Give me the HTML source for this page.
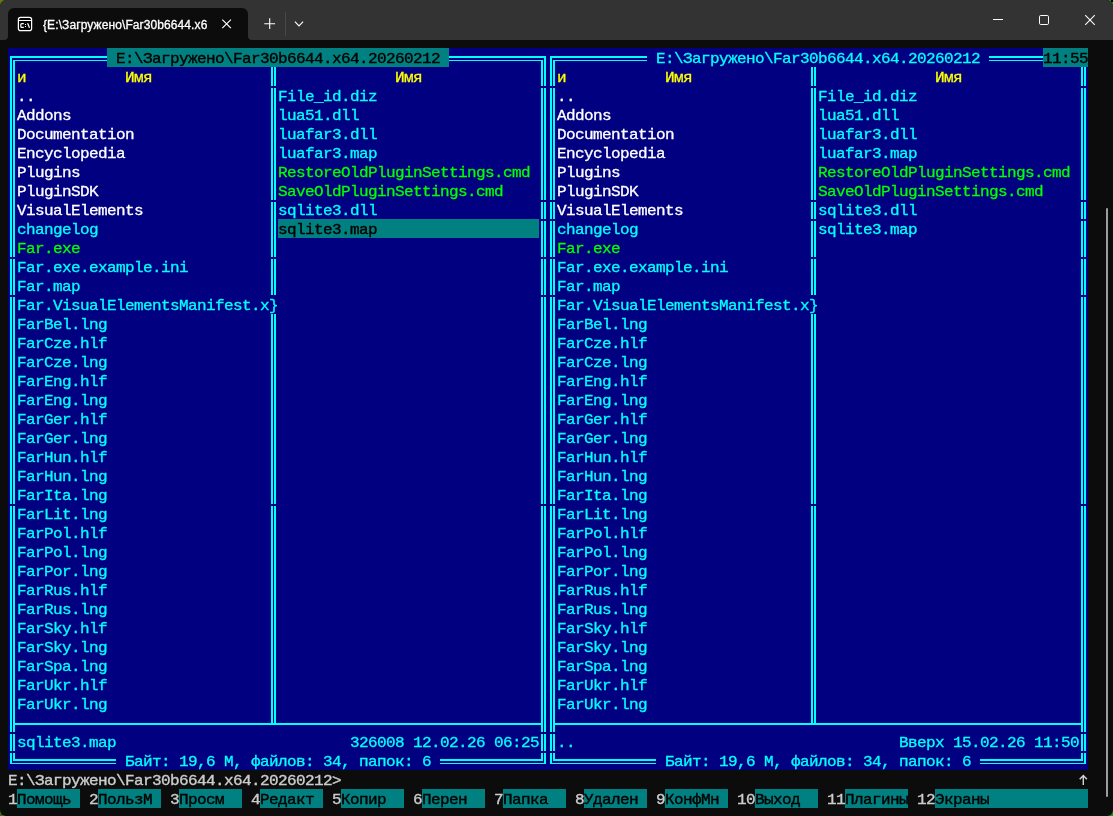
<!DOCTYPE html>
<html lang="ru"><head><meta charset="utf-8"><title>Far</title>
<style>
html,body{margin:0;padding:0;width:1113px;height:816px;overflow:hidden;background:#089208}
#win{will-change:transform;position:absolute;left:0;top:0;width:1113px;height:816px;background:#0c0c0c;overflow:hidden;border-radius:7px 7px 6px 6px}
#tb{position:absolute;left:0;top:0;width:1113px;height:40px;background:#333333}
#tab{position:absolute;left:8px;top:8px;width:240px;height:32px;background:#0c0c0c;border-radius:6px 6px 0 0}
#tabl,#tabr{position:absolute;top:36px;width:4px;height:4px;background:#0c0c0c}
#tabl{left:4px}#tabr{left:248px}
#tabl:after,#tabr:after{content:"";position:absolute;left:0;top:0;width:4px;height:4px;background:#333333}
#tabl:after{border-radius:0 0 4px 0}#tabr:after{border-radius:0 0 0 4px}
#ttl{position:absolute;left:43px;top:18px;height:16px;line-height:16px;font:12px "Liberation Sans",sans-serif;color:#fff;white-space:pre;letter-spacing:0.1px;-webkit-text-stroke:0.3px #fff}
#tb svg{position:absolute;overflow:visible}
#sep{position:absolute;left:285px;top:12px;width:1px;height:24px;background:#474747}
#sb{position:absolute;left:1106px;top:208px;width:2px;height:589px;background:#9d9d9d;border-radius:1px}
#term i{position:absolute;display:block}
#term b{position:absolute;display:block;height:19px;line-height:19px;font:normal 16px "Liberation Mono",monospace;letter-spacing:-0.6016px;white-space:pre;margin-top:2px;transform-origin:0 13px;transform:translateY(-.25px) scaleY(.885)}
.c{color:#00ffff;-webkit-text-stroke:0.33px #00ffff}
.w{color:#ffffff;-webkit-text-stroke:0.33px #ffffff}
.y{color:#ffff00;-webkit-text-stroke:0.33px #ffff00}
.g{color:#00ff00;-webkit-text-stroke:0.33px #00ff00}
.s{color:#cccccc;-webkit-text-stroke:0.4px #cccccc}
.k{color:#000000;-webkit-text-stroke:0.4px #000000}
.cp{position:absolute;width:2px;height:2px}

</style></head>
<body>
<i class="cp" style="left:0;top:0;background:#b84a26"></i><i class="cp" style="left:1111px;top:0;background:#000"></i><i class="cp" style="left:0;top:814px;background:#7a4020"></i><i class="cp" style="left:1111px;top:814px;background:#2a8a18"></i>
<div id="win">
<div id="tb">
<div id="tab"></div><div id="tabl"></div><div id="tabr"></div>
<div id="ttl">{E:\Загружено\Far30b6644.x6</div>
<div id="sep"></div>
<svg style="left:0;top:0" width="1113" height="40" viewBox="0 0 1113 40" fill="none" stroke="#fff" stroke-width="1">
<rect x="18.4" y="17.4" width="13.2" height="13.3" rx="2.2" stroke-width="1.25" fill="#000"/>
<path d="M18.4 20.5H31.6" stroke-width="1.2"/>
<path d="M23.8 23.7H21.9Q20.8 23.7 20.8 24.6V26.4Q20.8 27.3 21.9 27.3H23.8" stroke-width="1.2"/>
<path d="M25.5 24V25M25.5 26V27" stroke-width="1.1"/>
<path d="M27.6 23.2L29.5 27.8" stroke-width="1.25"/>
<path d="M222.3 19.6L230.9 28.2M230.9 19.6L222.3 28.2" stroke-width="1.15"/>
<path d="M269.7 18.3V29.1M264.3 23.7H275.1" stroke-width="1.1"/>
<path d="M294.9 21.6L299 25.9L303.1 21.6" stroke-width="1.1"/>
<path d="M993 19.5H1003" stroke-width="1"/>
<rect x="1039.5" y="15.5" width="9" height="9" rx="1.2"/>
<path d="M1085.2 15.2L1094.8 24.8M1094.8 15.2L1085.2 24.8" stroke-width="1.05"/>
</svg>
</div>
<div id="sb"></div>

<div id="term">
<i style="left:8px;top:48px;width:1080px;height:722px;background:#000080"></i>
<i style="left:107px;top:48px;width:342px;height:19px;background:#008080"></i>
<i style="left:1043px;top:48px;width:45px;height:19px;background:#008080"></i>
<i style="left:278px;top:219px;width:261px;height:19px;background:#008080"></i>
<i style="left:17px;top:789px;width:63px;height:19px;background:#008080"></i>
<i style="left:98px;top:789px;width:63px;height:19px;background:#008080"></i>
<i style="left:179px;top:789px;width:63px;height:19px;background:#008080"></i>
<i style="left:260px;top:789px;width:63px;height:19px;background:#008080"></i>
<i style="left:341px;top:789px;width:63px;height:19px;background:#008080"></i>
<i style="left:422px;top:789px;width:63px;height:19px;background:#008080"></i>
<i style="left:503px;top:789px;width:63px;height:19px;background:#008080"></i>
<i style="left:584px;top:789px;width:63px;height:19px;background:#008080"></i>
<i style="left:665px;top:789px;width:63px;height:19px;background:#008080"></i>
<i style="left:755px;top:789px;width:63px;height:19px;background:#008080"></i>
<i style="left:845px;top:789px;width:63px;height:19px;background:#008080"></i>
<i style="left:935px;top:789px;width:153px;height:19px;background:#008080"></i>
<i style="left:17px;top:56px;width:90px;height:2px;background:#00ffff"></i>
<i style="left:17px;top:60px;width:90px;height:1px;background:#00ffff"></i>
<i style="left:449px;top:56px;width:90px;height:2px;background:#00ffff"></i>
<i style="left:449px;top:60px;width:90px;height:1px;background:#00ffff"></i>
<i style="left:557px;top:56px;width:90px;height:2px;background:#00ffff"></i>
<i style="left:557px;top:60px;width:90px;height:1px;background:#00ffff"></i>
<i style="left:989px;top:56px;width:54px;height:2px;background:#00ffff"></i>
<i style="left:989px;top:60px;width:54px;height:1px;background:#00ffff"></i>
<i style="left:17px;top:723px;width:252px;height:2px;background:#00ffff"></i>
<i style="left:278px;top:723px;width:261px;height:2px;background:#00ffff"></i>
<i style="left:557px;top:723px;width:252px;height:2px;background:#00ffff"></i>
<i style="left:818px;top:723px;width:261px;height:2px;background:#00ffff"></i>
<i style="left:17px;top:759px;width:99px;height:2px;background:#00ffff"></i>
<i style="left:17px;top:763px;width:99px;height:1px;background:#00ffff"></i>
<i style="left:440px;top:759px;width:99px;height:2px;background:#00ffff"></i>
<i style="left:440px;top:763px;width:99px;height:1px;background:#00ffff"></i>
<i style="left:557px;top:759px;width:99px;height:2px;background:#00ffff"></i>
<i style="left:557px;top:763px;width:99px;height:1px;background:#00ffff"></i>
<i style="left:980px;top:759px;width:99px;height:2px;background:#00ffff"></i>
<i style="left:980px;top:763px;width:99px;height:1px;background:#00ffff"></i>
<i style="left:10px;top:67px;width:2px;height:646px;background:#00ffff"></i>
<i style="left:13px;top:67px;width:2px;height:646px;background:#00ffff"></i>
<i style="left:10px;top:732px;width:2px;height:19px;background:#00ffff"></i>
<i style="left:13px;top:732px;width:2px;height:19px;background:#00ffff"></i>
<i style="left:271px;top:67px;width:2px;height:228px;background:#00ffff"></i>
<i style="left:274px;top:67px;width:2px;height:228px;background:#00ffff"></i>
<i style="left:271px;top:314px;width:2px;height:399px;background:#00ffff"></i>
<i style="left:274px;top:314px;width:2px;height:399px;background:#00ffff"></i>
<i style="left:541px;top:67px;width:2px;height:646px;background:#00ffff"></i>
<i style="left:544px;top:67px;width:2px;height:646px;background:#00ffff"></i>
<i style="left:541px;top:732px;width:2px;height:19px;background:#00ffff"></i>
<i style="left:544px;top:732px;width:2px;height:19px;background:#00ffff"></i>
<i style="left:550px;top:67px;width:2px;height:646px;background:#00ffff"></i>
<i style="left:553px;top:67px;width:2px;height:646px;background:#00ffff"></i>
<i style="left:550px;top:732px;width:2px;height:19px;background:#00ffff"></i>
<i style="left:553px;top:732px;width:2px;height:19px;background:#00ffff"></i>
<i style="left:811px;top:67px;width:2px;height:228px;background:#00ffff"></i>
<i style="left:814px;top:67px;width:2px;height:228px;background:#00ffff"></i>
<i style="left:811px;top:314px;width:2px;height:399px;background:#00ffff"></i>
<i style="left:814px;top:314px;width:2px;height:399px;background:#00ffff"></i>
<i style="left:1081px;top:67px;width:2px;height:646px;background:#00ffff"></i>
<i style="left:1084px;top:67px;width:2px;height:646px;background:#00ffff"></i>
<i style="left:1081px;top:732px;width:2px;height:19px;background:#00ffff"></i>
<i style="left:1084px;top:732px;width:2px;height:19px;background:#00ffff"></i>
<i style="left:10px;top:56px;width:2px;height:11px;background:#00ffff"></i>
<i style="left:10px;top:56px;width:7px;height:2px;background:#00ffff"></i>
<i style="left:13px;top:60px;width:2px;height:7px;background:#00ffff"></i>
<i style="left:13px;top:60px;width:4px;height:1px;background:#00ffff"></i>
<i style="left:544px;top:56px;width:2px;height:11px;background:#00ffff"></i>
<i style="left:539px;top:56px;width:7px;height:2px;background:#00ffff"></i>
<i style="left:541px;top:60px;width:2px;height:7px;background:#00ffff"></i>
<i style="left:539px;top:60px;width:4px;height:1px;background:#00ffff"></i>
<i style="left:550px;top:56px;width:2px;height:11px;background:#00ffff"></i>
<i style="left:550px;top:56px;width:7px;height:2px;background:#00ffff"></i>
<i style="left:553px;top:60px;width:2px;height:7px;background:#00ffff"></i>
<i style="left:553px;top:60px;width:4px;height:1px;background:#00ffff"></i>
<i style="left:10px;top:713px;width:2px;height:19px;background:#00ffff"></i>
<i style="left:13px;top:713px;width:2px;height:19px;background:#00ffff"></i>
<i style="left:15px;top:723px;width:2px;height:2px;background:#00ffff"></i>
<i style="left:271px;top:713px;width:2px;height:10px;background:#00ffff"></i>
<i style="left:274px;top:713px;width:2px;height:10px;background:#00ffff"></i>
<i style="left:269px;top:723px;width:9px;height:2px;background:#00ffff"></i>
<i style="left:541px;top:713px;width:2px;height:19px;background:#00ffff"></i>
<i style="left:544px;top:713px;width:2px;height:19px;background:#00ffff"></i>
<i style="left:539px;top:723px;width:2px;height:2px;background:#00ffff"></i>
<i style="left:550px;top:713px;width:2px;height:19px;background:#00ffff"></i>
<i style="left:553px;top:713px;width:2px;height:19px;background:#00ffff"></i>
<i style="left:555px;top:723px;width:2px;height:2px;background:#00ffff"></i>
<i style="left:811px;top:713px;width:2px;height:10px;background:#00ffff"></i>
<i style="left:814px;top:713px;width:2px;height:10px;background:#00ffff"></i>
<i style="left:809px;top:723px;width:9px;height:2px;background:#00ffff"></i>
<i style="left:1081px;top:713px;width:2px;height:19px;background:#00ffff"></i>
<i style="left:1084px;top:713px;width:2px;height:19px;background:#00ffff"></i>
<i style="left:1079px;top:723px;width:2px;height:2px;background:#00ffff"></i>
<i style="left:10px;top:751px;width:2px;height:13px;background:#00ffff"></i>
<i style="left:10px;top:763px;width:7px;height:1px;background:#00ffff"></i>
<i style="left:13px;top:751px;width:2px;height:10px;background:#00ffff"></i>
<i style="left:13px;top:759px;width:4px;height:2px;background:#00ffff"></i>
<i style="left:544px;top:751px;width:2px;height:13px;background:#00ffff"></i>
<i style="left:539px;top:763px;width:7px;height:1px;background:#00ffff"></i>
<i style="left:541px;top:751px;width:2px;height:10px;background:#00ffff"></i>
<i style="left:539px;top:759px;width:4px;height:2px;background:#00ffff"></i>
<i style="left:550px;top:751px;width:2px;height:13px;background:#00ffff"></i>
<i style="left:550px;top:763px;width:7px;height:1px;background:#00ffff"></i>
<i style="left:553px;top:751px;width:2px;height:10px;background:#00ffff"></i>
<i style="left:553px;top:759px;width:4px;height:2px;background:#00ffff"></i>
<i style="left:1084px;top:751px;width:2px;height:13px;background:#00ffff"></i>
<i style="left:1079px;top:763px;width:7px;height:1px;background:#00ffff"></i>
<i style="left:1081px;top:751px;width:2px;height:10px;background:#00ffff"></i>
<i style="left:1079px;top:759px;width:4px;height:2px;background:#00ffff"></i>
<i style="left:10px;top:257px;width:5px;height:2px;background:#000080"></i>
<i style="left:10px;top:295px;width:5px;height:2px;background:#000080"></i>
<i style="left:10px;top:504px;width:5px;height:2px;background:#000080"></i>
<i style="left:10px;top:732px;width:5px;height:2px;background:#000080"></i>
<i style="left:10px;top:751px;width:5px;height:2px;background:#000080"></i>
<i style="left:271px;top:86px;width:5px;height:2px;background:#000080"></i>
<i style="left:271px;top:200px;width:5px;height:2px;background:#000080"></i>
<i style="left:271px;top:257px;width:5px;height:2px;background:#000080"></i>
<i style="left:271px;top:504px;width:5px;height:2px;background:#000080"></i>
<i style="left:541px;top:86px;width:5px;height:2px;background:#000080"></i>
<i style="left:541px;top:200px;width:5px;height:2px;background:#000080"></i>
<i style="left:541px;top:219px;width:5px;height:2px;background:#000080"></i>
<i style="left:541px;top:257px;width:5px;height:2px;background:#000080"></i>
<i style="left:541px;top:295px;width:5px;height:2px;background:#000080"></i>
<i style="left:541px;top:504px;width:5px;height:2px;background:#000080"></i>
<i style="left:541px;top:732px;width:5px;height:2px;background:#000080"></i>
<i style="left:541px;top:751px;width:5px;height:2px;background:#000080"></i>
<i style="left:550px;top:86px;width:5px;height:2px;background:#000080"></i>
<i style="left:550px;top:200px;width:5px;height:2px;background:#000080"></i>
<i style="left:550px;top:219px;width:5px;height:2px;background:#000080"></i>
<i style="left:550px;top:257px;width:5px;height:2px;background:#000080"></i>
<i style="left:550px;top:295px;width:5px;height:2px;background:#000080"></i>
<i style="left:550px;top:504px;width:5px;height:2px;background:#000080"></i>
<i style="left:550px;top:732px;width:5px;height:2px;background:#000080"></i>
<i style="left:550px;top:751px;width:5px;height:2px;background:#000080"></i>
<i style="left:811px;top:86px;width:5px;height:2px;background:#000080"></i>
<i style="left:811px;top:200px;width:5px;height:2px;background:#000080"></i>
<i style="left:811px;top:219px;width:5px;height:2px;background:#000080"></i>
<i style="left:811px;top:257px;width:5px;height:2px;background:#000080"></i>
<i style="left:811px;top:504px;width:5px;height:2px;background:#000080"></i>
<i style="left:1081px;top:86px;width:5px;height:2px;background:#000080"></i>
<i style="left:1081px;top:200px;width:5px;height:2px;background:#000080"></i>
<i style="left:1081px;top:219px;width:5px;height:2px;background:#000080"></i>
<i style="left:1081px;top:257px;width:5px;height:2px;background:#000080"></i>
<i style="left:1081px;top:295px;width:5px;height:2px;background:#000080"></i>
<i style="left:1081px;top:504px;width:5px;height:2px;background:#000080"></i>
<i style="left:1081px;top:732px;width:5px;height:2px;background:#000080"></i>
<i style="left:1081px;top:751px;width:5px;height:2px;background:#000080"></i>
<b class="k" style="left:116px;top:48px">E:\Загружено\Far30b6644.x64.20260212</b>
<b class="c" style="left:656px;top:48px">E:\Загружено\Far30b6644.x64.20260212</b>
<b class="k" style="left:1043px;top:48px">11:55</b>
<b class="y" style="left:17px;top:67px">и</b>
<b class="y" style="left:125px;top:67px">Имя</b>
<b class="y" style="left:395px;top:67px">Имя</b>
<b class="y" style="left:557px;top:67px">и</b>
<b class="y" style="left:665px;top:67px">Имя</b>
<b class="y" style="left:935px;top:67px">Имя</b>
<b class="w" style="left:17px;top:86px">..</b>
<b class="c" style="left:278px;top:86px">File_id.diz</b>
<b class="w" style="left:557px;top:86px">..</b>
<b class="c" style="left:818px;top:86px">File_id.diz</b>
<b class="w" style="left:17px;top:105px">Addons</b>
<b class="c" style="left:278px;top:105px">lua51.dll</b>
<b class="w" style="left:557px;top:105px">Addons</b>
<b class="c" style="left:818px;top:105px">lua51.dll</b>
<b class="w" style="left:17px;top:124px">Documentation</b>
<b class="c" style="left:278px;top:124px">luafar3.dll</b>
<b class="w" style="left:557px;top:124px">Documentation</b>
<b class="c" style="left:818px;top:124px">luafar3.dll</b>
<b class="w" style="left:17px;top:143px">Encyclopedia</b>
<b class="c" style="left:278px;top:143px">luafar3.map</b>
<b class="w" style="left:557px;top:143px">Encyclopedia</b>
<b class="c" style="left:818px;top:143px">luafar3.map</b>
<b class="w" style="left:17px;top:162px">Plugins</b>
<b class="g" style="left:278px;top:162px">RestoreOldPluginSettings.cmd</b>
<b class="w" style="left:557px;top:162px">Plugins</b>
<b class="g" style="left:818px;top:162px">RestoreOldPluginSettings.cmd</b>
<b class="w" style="left:17px;top:181px">PluginSDK</b>
<b class="g" style="left:278px;top:181px">SaveOldPluginSettings.cmd</b>
<b class="w" style="left:557px;top:181px">PluginSDK</b>
<b class="g" style="left:818px;top:181px">SaveOldPluginSettings.cmd</b>
<b class="w" style="left:17px;top:200px">VisualElements</b>
<b class="c" style="left:278px;top:200px">sqlite3.dll</b>
<b class="w" style="left:557px;top:200px">VisualElements</b>
<b class="c" style="left:818px;top:200px">sqlite3.dll</b>
<b class="c" style="left:17px;top:219px">changelog</b>
<b class="k" style="left:278px;top:219px">sqlite3.map</b>
<b class="c" style="left:557px;top:219px">changelog</b>
<b class="c" style="left:818px;top:219px">sqlite3.map</b>
<b class="g" style="left:17px;top:238px">Far.exe</b>
<b class="g" style="left:557px;top:238px">Far.exe</b>
<b class="c" style="left:17px;top:257px">Far.exe.example.ini</b>
<b class="c" style="left:557px;top:257px">Far.exe.example.ini</b>
<b class="c" style="left:17px;top:276px">Far.map</b>
<b class="c" style="left:557px;top:276px">Far.map</b>
<b class="c" style="left:17px;top:295px">Far.VisualElementsManifest.x}</b>
<b class="c" style="left:557px;top:295px">Far.VisualElementsManifest.x}</b>
<b class="c" style="left:17px;top:314px">FarBel.lng</b>
<b class="c" style="left:557px;top:314px">FarBel.lng</b>
<b class="c" style="left:17px;top:333px">FarCze.hlf</b>
<b class="c" style="left:557px;top:333px">FarCze.hlf</b>
<b class="c" style="left:17px;top:352px">FarCze.lng</b>
<b class="c" style="left:557px;top:352px">FarCze.lng</b>
<b class="c" style="left:17px;top:371px">FarEng.hlf</b>
<b class="c" style="left:557px;top:371px">FarEng.hlf</b>
<b class="c" style="left:17px;top:390px">FarEng.lng</b>
<b class="c" style="left:557px;top:390px">FarEng.lng</b>
<b class="c" style="left:17px;top:409px">FarGer.hlf</b>
<b class="c" style="left:557px;top:409px">FarGer.hlf</b>
<b class="c" style="left:17px;top:428px">FarGer.lng</b>
<b class="c" style="left:557px;top:428px">FarGer.lng</b>
<b class="c" style="left:17px;top:447px">FarHun.hlf</b>
<b class="c" style="left:557px;top:447px">FarHun.hlf</b>
<b class="c" style="left:17px;top:466px">FarHun.lng</b>
<b class="c" style="left:557px;top:466px">FarHun.lng</b>
<b class="c" style="left:17px;top:485px">FarIta.lng</b>
<b class="c" style="left:557px;top:485px">FarIta.lng</b>
<b class="c" style="left:17px;top:504px">FarLit.lng</b>
<b class="c" style="left:557px;top:504px">FarLit.lng</b>
<b class="c" style="left:17px;top:523px">FarPol.hlf</b>
<b class="c" style="left:557px;top:523px">FarPol.hlf</b>
<b class="c" style="left:17px;top:542px">FarPol.lng</b>
<b class="c" style="left:557px;top:542px">FarPol.lng</b>
<b class="c" style="left:17px;top:561px">FarPor.lng</b>
<b class="c" style="left:557px;top:561px">FarPor.lng</b>
<b class="c" style="left:17px;top:580px">FarRus.hlf</b>
<b class="c" style="left:557px;top:580px">FarRus.hlf</b>
<b class="c" style="left:17px;top:599px">FarRus.lng</b>
<b class="c" style="left:557px;top:599px">FarRus.lng</b>
<b class="c" style="left:17px;top:618px">FarSky.hlf</b>
<b class="c" style="left:557px;top:618px">FarSky.hlf</b>
<b class="c" style="left:17px;top:637px">FarSky.lng</b>
<b class="c" style="left:557px;top:637px">FarSky.lng</b>
<b class="c" style="left:17px;top:656px">FarSpa.lng</b>
<b class="c" style="left:557px;top:656px">FarSpa.lng</b>
<b class="c" style="left:17px;top:675px">FarUkr.hlf</b>
<b class="c" style="left:557px;top:675px">FarUkr.hlf</b>
<b class="c" style="left:17px;top:694px">FarUkr.lng</b>
<b class="c" style="left:557px;top:694px">FarUkr.lng</b>
<b class="c" style="left:17px;top:732px">sqlite3.map                          326008 12.02.26 06:25</b>
<b class="c" style="left:557px;top:732px">..                                    Вверх 15.02.26 11:50</b>
<b class="c" style="left:125px;top:751px">Байт: 19,6 М, файлов: 34, папок: 6</b>
<b class="c" style="left:665px;top:751px">Байт: 19,6 М, файлов: 34, папок: 6</b>
<b class="s" style="left:8px;top:770px">E:\Загружено\Far30b6644.x64.20260212&gt;</b>
<b class="s" style="left:8px;top:789px">1</b>
<b class="k" style="left:17px;top:789px">Помощь</b>
<b class="s" style="left:89px;top:789px">2</b>
<b class="k" style="left:98px;top:789px">ПользМ</b>
<b class="s" style="left:170px;top:789px">3</b>
<b class="k" style="left:179px;top:789px">Просм</b>
<b class="s" style="left:251px;top:789px">4</b>
<b class="k" style="left:260px;top:789px">Редакт</b>
<b class="s" style="left:332px;top:789px">5</b>
<b class="k" style="left:341px;top:789px">Копир</b>
<b class="s" style="left:413px;top:789px">6</b>
<b class="k" style="left:422px;top:789px">Перен</b>
<b class="s" style="left:494px;top:789px">7</b>
<b class="k" style="left:503px;top:789px">Папка</b>
<b class="s" style="left:575px;top:789px">8</b>
<b class="k" style="left:584px;top:789px">Удален</b>
<b class="s" style="left:656px;top:789px">9</b>
<b class="k" style="left:665px;top:789px">КонфМн</b>
<b class="s" style="left:737px;top:789px">10</b>
<b class="k" style="left:755px;top:789px">Выход</b>
<b class="s" style="left:827px;top:789px">11</b>
<b class="k" style="left:845px;top:789px">Плагины</b>
<b class="s" style="left:917px;top:789px">12</b>
<b class="k" style="left:935px;top:789px">Экраны</b>
<svg style="position:absolute;left:1076px;top:772px" width="14" height="16" viewBox="1076 772 14 16" fill="none" stroke="#d2d2d2" stroke-width="1.45"><path d="M1083.3 785V776M1079.7 779.2L1083.3 775.6L1086.9 779.2"/></svg>
</div>
</div>
</body></html>
